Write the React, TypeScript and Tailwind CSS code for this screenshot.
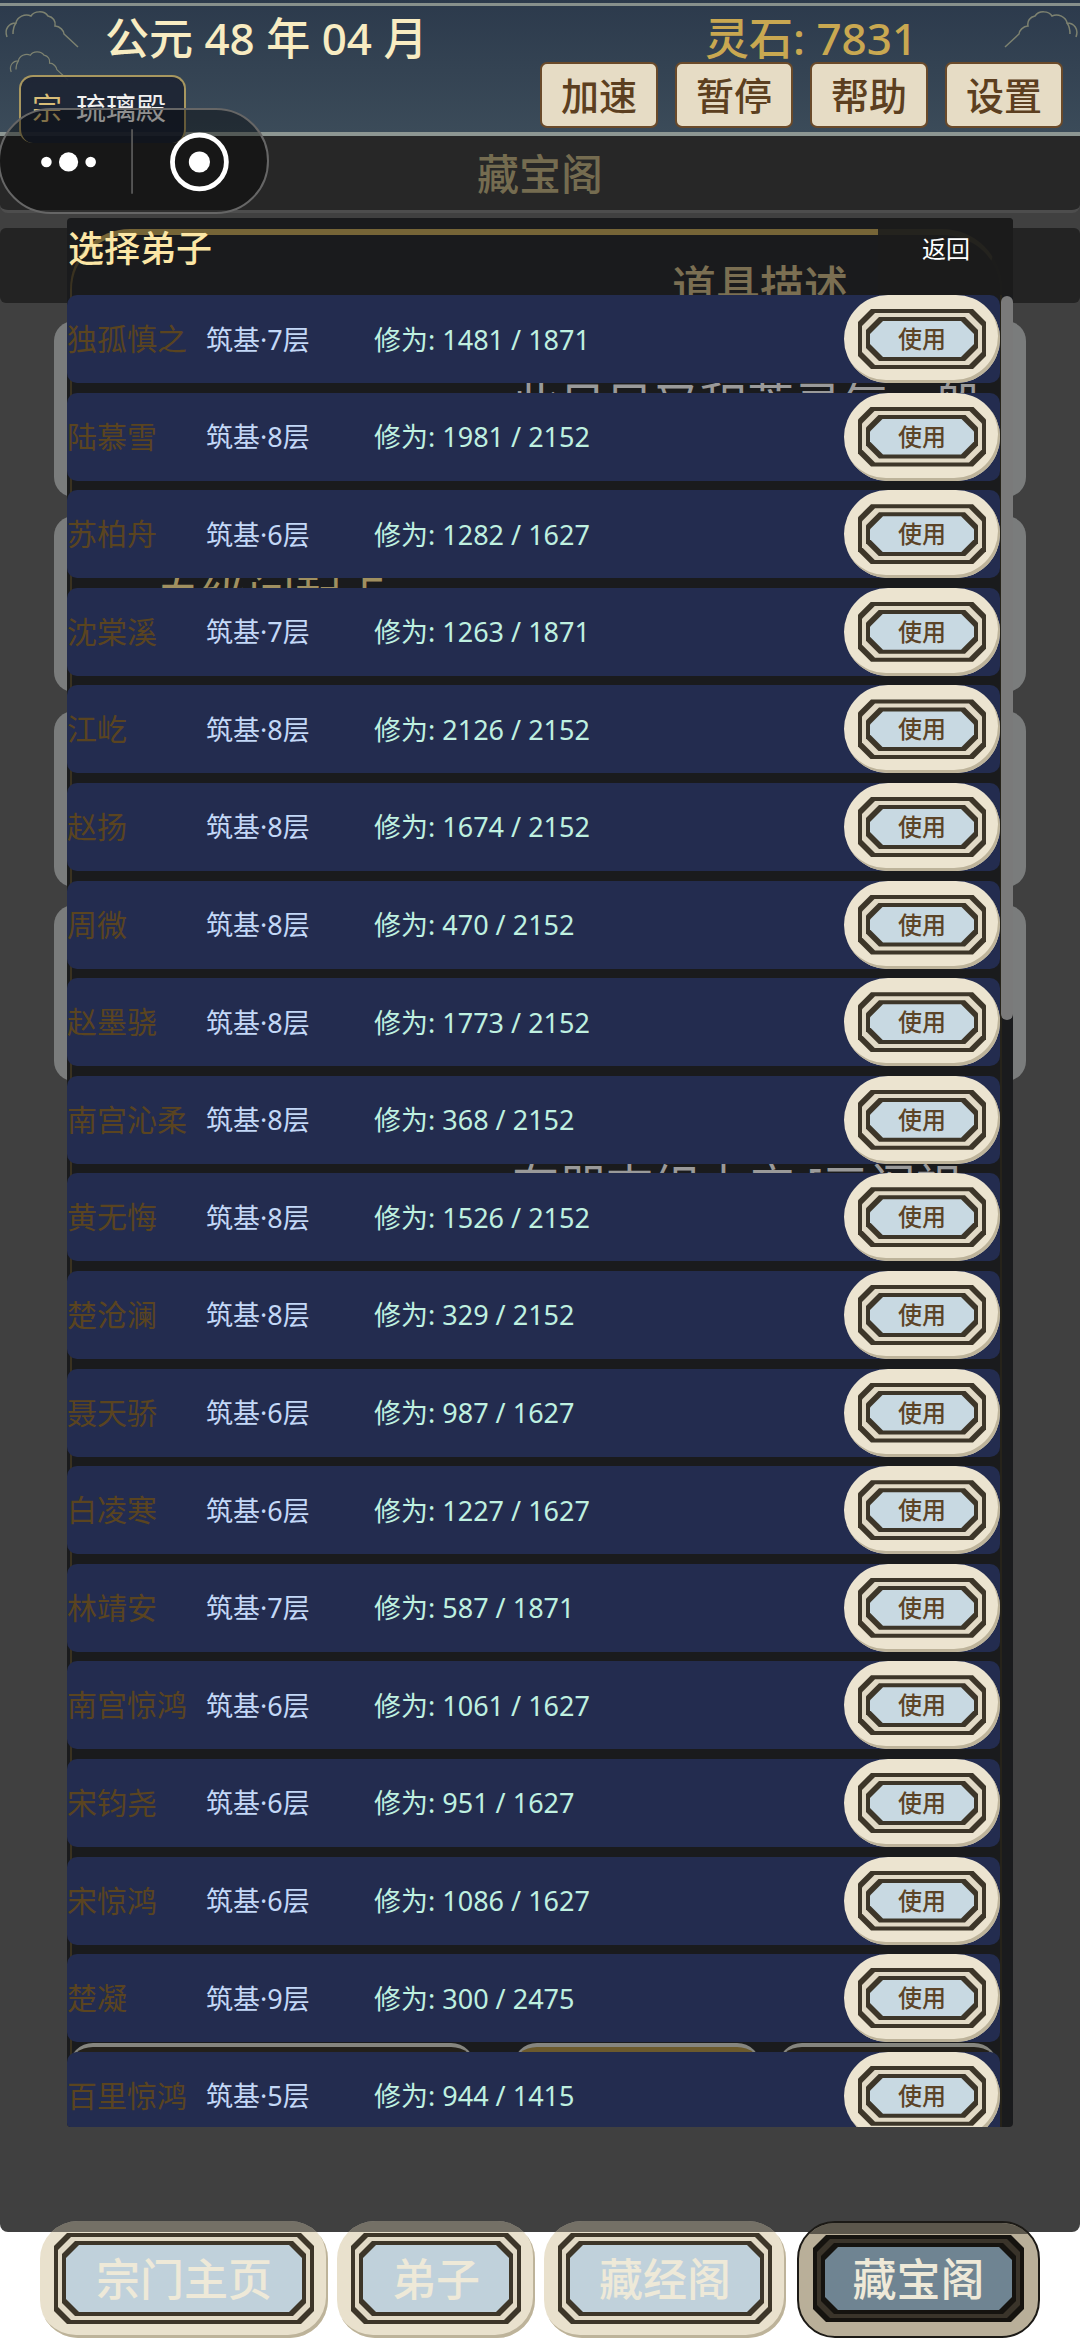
import type { ReactNode } from "react";

const disciples = [
  ["独孤慎之", "筑基·7层", "1481 / 1871"],
  ["陆慕雪", "筑基·8层", "1981 / 2152"],
  ["苏柏舟", "筑基·6层", "1282 / 1627"],
  ["沈棠溪", "筑基·7层", "1263 / 1871"],
  ["江屹", "筑基·8层", "2126 / 2152"],
  ["赵扬", "筑基·8层", "1674 / 2152"],
  ["周微", "筑基·8层", "470 / 2152"],
  ["赵墨骁", "筑基·8层", "1773 / 2152"],
  ["南宫沁柔", "筑基·8层", "368 / 2152"],
  ["黄无悔", "筑基·8层", "1526 / 2152"],
  ["楚沧澜", "筑基·8层", "329 / 2152"],
  ["聂天骄", "筑基·6层", "987 / 1627"],
  ["白凌寒", "筑基·6层", "1227 / 1627"],
  ["林靖安", "筑基·7层", "587 / 1871"],
  ["南宫惊鸿", "筑基·6层", "1061 / 1627"],
  ["宋钧尧", "筑基·6层", "951 / 1627"],
  ["宋惊鸿", "筑基·6层", "1086 / 1627"],
  ["楚凝", "筑基·9层", "300 / 2475"],
  ["百里惊鸿", "筑基·5层", "944 / 1415"],
];

const chamfer =
  "[clip-path:polygon(13px_0,calc(100%-13px)_0,100%_13px,100%_calc(100%-13px),calc(100%-13px)_100%,13px_100%,0_calc(100%-13px),0_13px)]";

// nested octagon frame used by the list and nav buttons
function Frame({ dark, light, fill, children }: { dark: string; light: string; fill: string; children: ReactNode }) {
  return (
    <div className={`h-full w-full p-[4px] ${chamfer}`} style={{ background: dark }}>
      <div className={`h-full w-full p-[4px] ${chamfer}`} style={{ background: light }}>
        <div className={`h-full w-full p-[4px] ${chamfer}`} style={{ background: dark }}>
          <div className={`flex h-full w-full items-center justify-center ${chamfer}`} style={{ background: fill }}>
            {children}
          </div>
        </div>
      </div>
    </div>
  );
}

function UseButton() {
  return (
    <div className="h-[88px] w-[156px] shrink-0 rounded-[44px] bg-[#ece4d0] px-[14px] py-[14px] shadow-[inset_-2px_-3px_0_#bdb39a]">
      <Frame dark="#3d3629" light="#e2dac6" fill="#c8d9e2">
        <span className="text-[24px] font-medium text-[#5c4428]">使用</span>
      </Frame>
    </div>
  );
}

function NavButton({ label, width, active }: { label: string; width: string; active?: boolean }) {
  return (
    <div
      className={`relative h-[117px] overflow-hidden rounded-[38px] px-[14px] pt-[12px] pb-[14px] ${width} ${
        active ? "bg-[#b9af99] border-2 border-[#1c1a16]" : "bg-[#e9e1cd] shadow-[inset_-2px_-3px_0_#bdb39a]"
      }`}
    >
      <Frame dark={active ? "#15130f" : "#3d3629"} light={active ? "#3a342a" : "#e2dac6"} fill={active ? "#6f8492" : "#c0d1db"}>
        <span className="text-[44px] font-medium leading-none text-[#eee9d8]">{label}</span>
      </Frame>
      <div className="absolute inset-x-0 top-0 h-[11px] bg-black/50" />
    </div>
  );
}

function Cloud({ className }: { className: string }) {
  return (
    <svg viewBox="0 0 80 50" fill="none" stroke="#7d8270" strokeWidth="1.5" className={className}>
      <path d="M4 30c-3-8 2-14 9-14 1-6 9-10 15-7 3-5 13-6 17 0 5 1 8 5 7 10 5 0 9 5 9 8l14 13" />
      <path d="M13 16c-3 4-3 7-3 11" />
    </svg>
  );
}

export default function App() {
  return (
    <div className="relative flex h-[2338px] w-[1080px] flex-col overflow-hidden bg-white font-['Noto_Sans','Noto_Sans_CJK_SC',sans-serif]">
      <header className="relative z-10 h-[136px] shrink-0 border-b-[4px] border-[#8d9692] bg-gradient-to-b from-[#2c3a4c] to-[#3b4b59]">
        <div className="absolute inset-x-0 top-[3px] h-[3px] bg-[#87908c]" />
        <Cloud className="absolute left-[3px] top-[7px] h-[50px] w-[80px]" />
        <Cloud className="absolute left-[8px] top-[48px] h-[40px] w-[64px]" />
        <Cloud className="absolute right-[0px] top-[7px] h-[50px] w-[80px] -scale-x-100" />
        <div className="flex h-[62px] items-center pt-[14px]">
          <div className="ml-[105px] w-[600px] text-[44px] font-medium leading-none text-[#f8ecc2]">公元 48 年 04 月</div>
          <div className="text-[44px] font-medium leading-none text-[#c9a851]">灵石: 7831</div>
        </div>
        <div className="flex justify-end gap-[17px] pr-[17px]">
          {["加速", "暂停", "帮助", "设置"].map((t) => (
            <div
              key={t}
              className="flex h-[66px] w-[118px] items-center justify-center rounded-[7px] border-2 border-[#6a4a2a] bg-[#e6dcc5] text-[38px] font-medium text-[#5c3f20]"
            >
              {t}
            </div>
          ))}
        </div>
      </header>

      {/* badge + wechat capsule */}
      <div className="absolute left-[19px] top-[75px] z-20 flex h-[68px] w-[167px] items-start gap-[14px] rounded-[14px] border-2 border-b-0 border-[#a8975f] bg-[#1d2433]/90 pl-[11px] pt-[16px] text-[30px] leading-none">
        <span className="text-[#d8bd78]">宗</span>
        <span className="text-[#f0f0f0]">琉璃殿</span>
      </div>
      <div className="absolute -left-[2px] top-[108px] z-30 flex h-[106px] w-[271px] items-center rounded-full border-2 border-[#666] bg-black/40">
        <svg viewBox="0 0 271 106" className="h-full w-full">
          <circle cx="45" cy="54" r="5.5" fill="#fff" />
          <circle cx="68" cy="54" r="10" fill="#fff" />
          <circle cx="91" cy="54" r="5.5" fill="#fff" />
          <line x1="134" y1="20" x2="134" y2="87" stroke="#555" strokeWidth="2" />
          <circle cx="204" cy="54" r="28" fill="none" stroke="#fff" strokeWidth="5" />
          <circle cx="204" cy="54" r="11" fill="#fff" />
        </svg>
      </div>

      <main className="relative h-[2096px] shrink-0 rounded-b-[8px] bg-[#404040]">
        <div className="flex h-[77px] items-center justify-center rounded-b-[8px] border-b-[3px] border-[#4d4d4d] bg-[#272727] text-[42px] font-medium text-[#756c50]">
          藏宝阁
        </div>

        {/* cards behind the modal */}
        {[185, 380, 575, 769].map((t) => (
          <div key={t} className="absolute left-[54px] h-[176px] w-[972px] rounded-[20px] bg-[#7a7c7c]" style={{ top: t }} />
        ))}
        <div className="absolute left-0 right-0 top-[92px] h-[75px] rounded-[6px] bg-[#232323]" />
        <div className="absolute bottom-[105px] left-[115px] h-[6px] w-[850px] rounded-b-[6px] bg-[#b09a5a]" />

        <div className="absolute left-[67px] top-[82px] h-[1909px] w-[946px] overflow-hidden rounded-[4px] bg-[#1a1b1d]">
          {/* gold outline of the page underneath */}
          <div className="absolute left-[3px] top-[11px] h-[1900px] w-[932px] rounded-t-[60px] border-x-2 border-t-[6px] border-l-[#3a3220] border-r-[#26231a] border-t-[#766537]" />
          <div className="absolute right-0 top-0 h-[77px] w-[135px] bg-[#1c1c1c]/90" />

          {/* bits of the page underneath, seen in the gaps */}
          <div className="absolute left-[605px] top-[46px] text-[44px] font-medium leading-none text-[#7b6f52]">道具描述</div>
          <div className="absolute left-[445px] top-[162px] text-[47px] leading-none text-[#9a9a9a]">此日目又积蓄灵气一般</div>
          <div className="absolute left-[87px] top-[352px] text-[47px] leading-none text-[#a09060]">百级间起卡</div>
          <div className="absolute left-[445px] top-[944px] text-[47px] leading-none text-[#9a9a9a]">存朋志织山庄 [三阁祖</div>
          <div className="absolute left-[2px] top-[1825px] h-[40px] w-[406px] rounded-t-[24px] border-t-[4px] border-[#85857f] bg-[#23201a]" />
          <div className="absolute left-[446px] top-[1825px] h-[40px] w-[248px] rounded-t-[24px] border-t-[4px] border-[#85857f] bg-[#6c5a2c]" />
          <div className="absolute left-[711px] top-[1825px] h-[40px] w-[220px] rounded-t-[24px] border-t-[4px] border-[#85857f] bg-[#23201a]" />

          <div className="relative flex h-[77px] items-start justify-between pl-px pr-[43px] pt-[13px]">
            <div className="text-[36px] font-medium leading-none text-[#fbe6a5]">选择弟子</div>
            <div className="pt-[6px] text-[24px] leading-none text-white">返回</div>
          </div>

          <div className="relative flex flex-col gap-[9.6px]">
            {disciples.map(([name, realm, xp]) => (
              <div key={name} className="mr-[13px] flex h-[88px] shrink-0 items-center rounded-[10px] bg-[#232c4f]">
                <div className="w-[139px] shrink-0 whitespace-nowrap text-[30px] leading-none text-[#5a4420]">{name}</div>
                <div className="w-[168px] shrink-0 text-[27px] leading-none text-[#c3d8f7]">{realm}</div>
                <div className="flex-1 text-[27px] leading-none text-[#bff0e0]">修为: {xp}</div>
                <UseButton />
              </div>
            ))}
          </div>

          <div className="absolute right-0 top-[78px] h-[724px] w-[12px] rounded-full bg-[#7a7a7a]" />
        </div>
      </main>

      <nav className="relative z-10 -mt-[11px] flex pl-[40px]">
        <NavButton label="宗门主页" width="w-[288px]" />
        <div className="w-[9px]" />
        <NavButton label="弟子" width="w-[198px]" />
        <div className="w-[9px]" />
        <NavButton label="藏经阁" width="w-[242px]" />
        <div className="w-[11px]" />
        <NavButton label="藏宝阁" width="w-[243px]" active />
      </nav>
    </div>
  );
}
